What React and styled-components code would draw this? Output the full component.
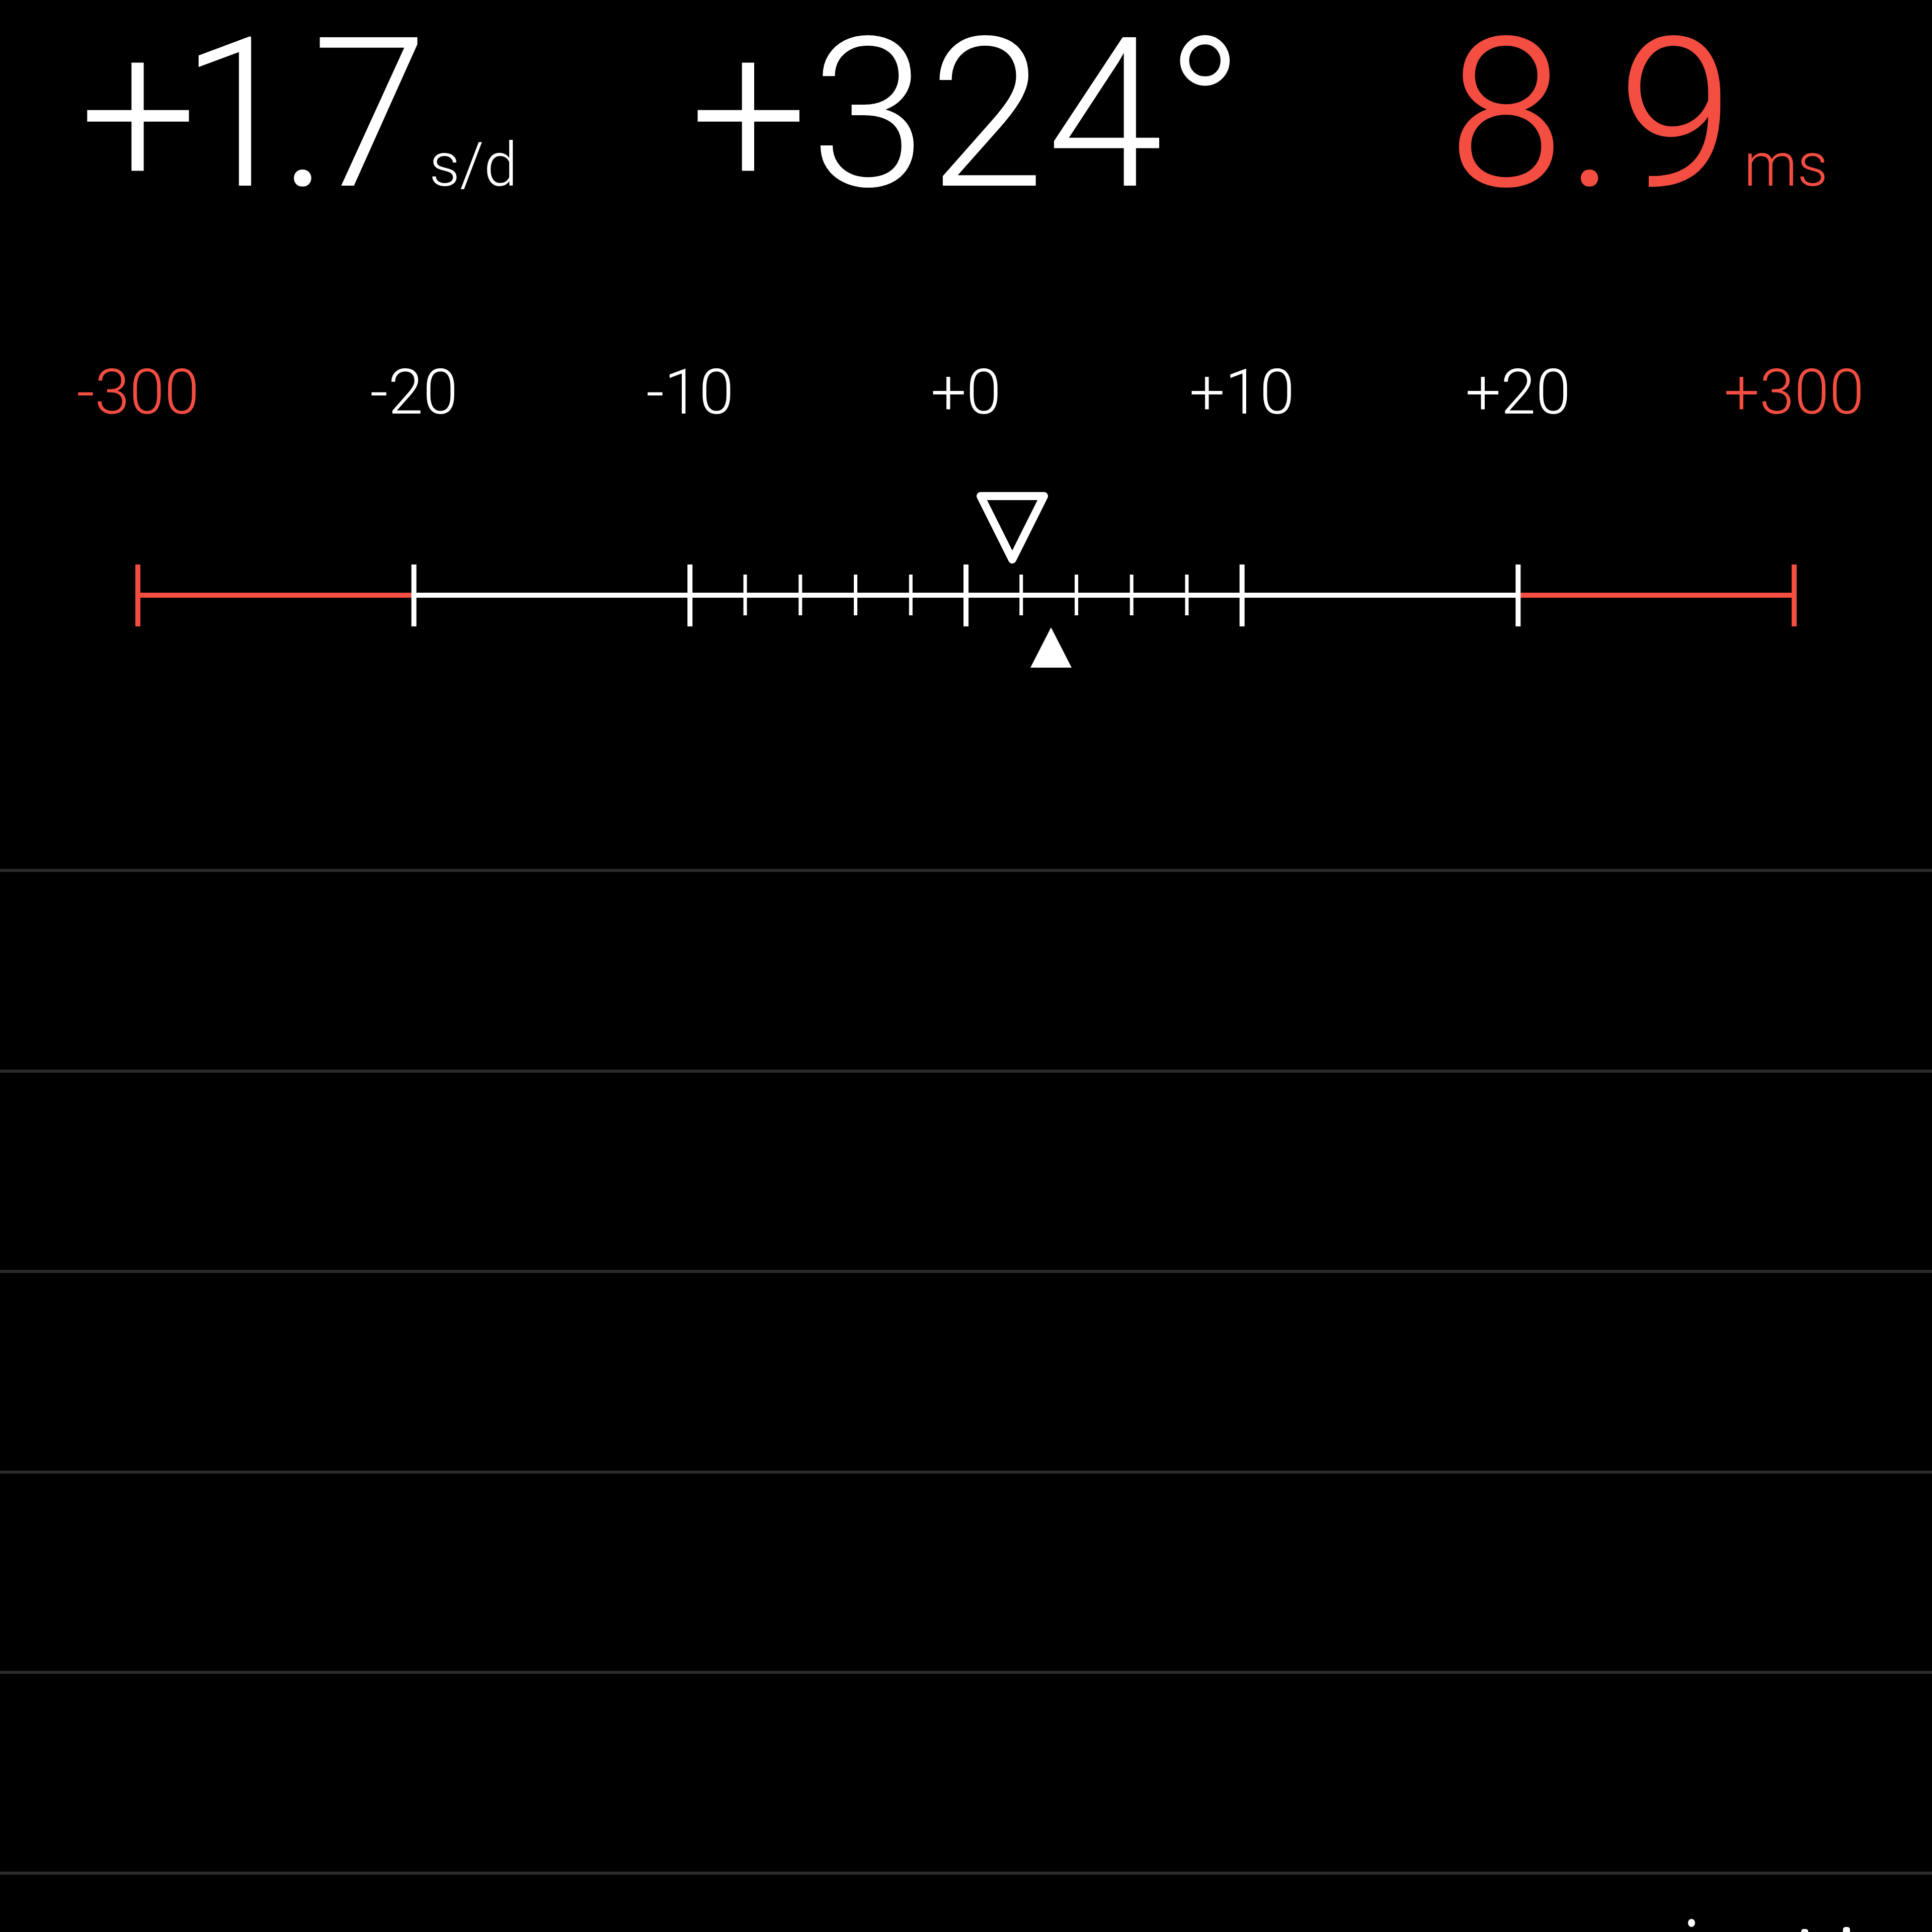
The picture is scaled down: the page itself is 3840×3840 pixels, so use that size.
import React from "react";
import styled, { createGlobalStyle } from "styled-components";

const RED = "#f44d41";
const WHITE = "#ffffff";
const GRID = "#2b2b2b";

const GlobalStyle = createGlobalStyle`
  html, body {
    margin: 0;
    padding: 0;
    background: #000;
  }
`;

const Screen = styled.div`
  width: 3840px;
  height: 3840px;
  overflow: hidden;
  background: #000;
  color: ${WHITE};
  font-family: Roboto, "Helvetica Neue", "Liberation Sans", sans-serif;
  font-weight: 300;
`;

const Readouts = styled.div`
  box-sizing: border-box;
  height: 600px;
  padding: 20px 0 0 158px;
  display: flex;
  align-items: baseline;
`;

const Reading = styled.div`
  display: flex;
  align-items: baseline;
  margin-left: ${(p) => p.$offset || 0}px;
  color: ${(p) => p.$color};
`;

const Value = styled.span`
  font-size: 415px;
  line-height: 415px;
  font-weight: 300;
  letter-spacing: ${(p) => p.$spacing}px;
`;

const Unit = styled.span`
  font-size: 120px;
  line-height: 120px;
  font-weight: 300;
  margin-left: ${(p) => p.$gap}px;
`;

const ScaleLabels = styled.div`
  box-sizing: border-box;
  height: 360px;
  padding-top: 117px;
  display: grid;
  grid-template-columns: repeat(7, 1fr);
`;

const ScaleLabel = styled.div`
  text-align: center;
  font-size: 125px;
  line-height: 125px;
  font-weight: 300;
  color: ${(p) => p.$color};
`;

const RulerWrap = styled.div`
  height: 380px;
  svg {
    display: block;
  }
`;

const Rows = styled.div`
  margin-top: 387px;
`;

const Row = styled.div`
  box-sizing: border-box;
  height: 398.6px;
  border-top: 6px solid ${GRID};
`;

const Footer = styled.div`
  box-sizing: border-box;
  border-top: 6px solid ${GRID};
  padding-top: 86px;
  svg {
    display: block;
  }
`;

const readings = [
  { value: "+1.7", unit: "s/d", color: WHITE, offset: 0, spacing: -34, gap: 37 },
  { value: "+324°", unit: null, color: WHITE, offset: 343, spacing: 5, gap: 0 },
  { value: "8.9", unit: "ms", color: RED, offset: 400, spacing: 4, gap: 16 },
];

const labels = [
  { text: "-300", color: RED },
  { text: "-20", color: WHITE },
  { text: "-10", color: WHITE },
  { text: "+0", color: WHITE },
  { text: "+10", color: WHITE },
  { text: "+20", color: WHITE },
  { text: "+300", color: RED },
];

const X0 = 274;
const STEP = 548.67;
const LINE_Y = 1183;

function Ruler() {
  const majors = Array.from({ length: 7 }, (_, i) => X0 + STEP * i);
  const minors = [];
  for (let k = 1; k <= 4; k++) {
    minors.push(majors[2] + (STEP / 5) * k);
    minors.push(majors[3] + (STEP / 5) * k);
  }
  return (
    <svg width="3840" height="380" viewBox="0 960 3840 380">
      <line x1={majors[0]} y1={LINE_Y} x2={majors[1]} y2={LINE_Y} stroke={RED} strokeWidth="10" />
      <line x1={majors[1]} y1={LINE_Y} x2={majors[5]} y2={LINE_Y} stroke={WHITE} strokeWidth="10" />
      <line x1={majors[5]} y1={LINE_Y} x2={majors[6]} y2={LINE_Y} stroke={RED} strokeWidth="10" />
      {majors.map((x, i) => (
        <line
          key={"M" + i}
          x1={x}
          y1={1122}
          x2={x}
          y2={1245}
          stroke={i === 0 || i === 6 ? RED : WHITE}
          strokeWidth="10"
        />
      ))}
      {minors.map((x, i) => (
        <line key={"m" + i} x1={x} y1={1142} x2={x} y2={1223} stroke={WHITE} strokeWidth="7" />
      ))}
      <polygon
        points="1949,986 2075,986 2012,1112"
        fill="none"
        stroke={WHITE}
        strokeWidth="16"
        strokeLinejoin="round"
      />
      <polygon points="2048,1327 2130,1327 2089,1247" fill={WHITE} />
    </svg>
  );
}

export default function App() {
  return (
    <>
      <GlobalStyle />
      <Screen>
        <Readouts>
          {readings.map((r, i) => (
            <Reading key={i} $color={r.color} $offset={r.offset}>
              <Value $spacing={r.spacing}>{r.value}</Value>
              {r.unit && <Unit $gap={r.gap}>{r.unit}</Unit>}
            </Reading>
          ))}
        </Readouts>
        <ScaleLabels>
          {labels.map((l, i) => (
            <ScaleLabel key={i} $color={l.color}>
              {l.text}
            </ScaleLabel>
          ))}
        </ScaleLabels>
        <RulerWrap>
          <Ruler />
        </RulerWrap>
        <Rows>
          {Array.from({ length: 5 }, (_, i) => (
            <Row key={i} />
          ))}
          <Footer>
            <svg width="3840" height="30" viewBox="0 0 3840 30">
              <ellipse cx="3362" cy="10" rx="7" ry="8" fill={WHITE} />
              <rect x="3580" y="22" width="14" height="12" rx="5" fill={WHITE} />
              <rect x="3663" y="18" width="14" height="16" rx="5" fill={WHITE} />
            </svg>
          </Footer>
        </Rows>
      </Screen>
    </>
  );
}
